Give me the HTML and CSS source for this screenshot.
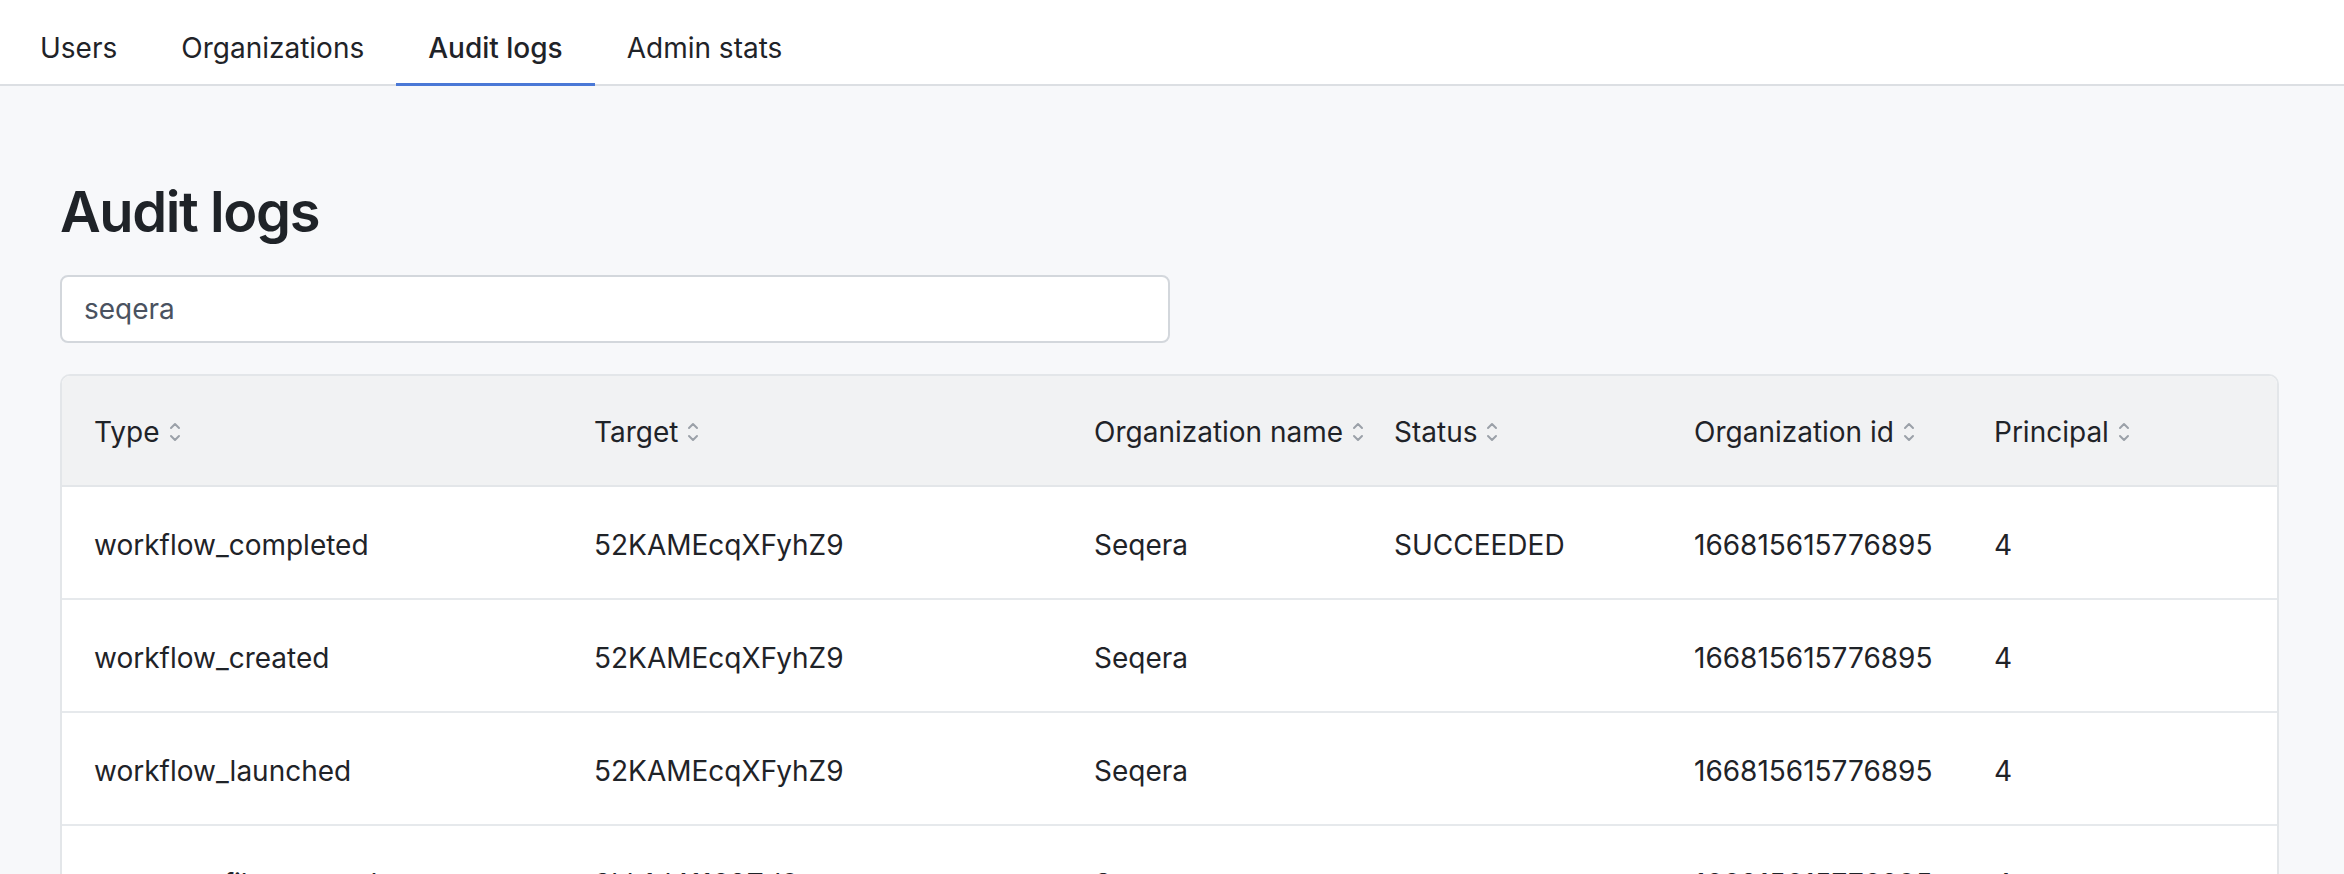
FILE: index.html
```html
<!DOCTYPE html>
<html lang="en">
<head>
<meta charset="utf-8">
<title>Audit logs</title>
<link rel="stylesheet" href="styles.css">
</head>
<body>
<nav class="tabs">
  <a class="tab">Users</a>
  <a class="tab">Organizations</a>
  <a class="tab active">Audit logs</a>
  <a class="tab">Admin stats</a>
</nav>
<main class="content">
  <h1 class="title">Audit logs</h1>
  <input class="search" type="text" value="seqera">
  <div class="table-wrap">
    <table class="logs">
      <colgroup>
        <col class="c-wide"><col class="c-wide"><col class="c-mid"><col class="c-mid"><col class="c-mid"><col>
      </colgroup>
      <thead>
        <tr>
          <th><span class="th-in">Type<svg class="sort" viewBox="0 0 12 22"><polyline points="2,7 6,3 10,7"/><polyline points="2,15 6,19 10,15"/></svg></span></th>
          <th><span class="th-in">Target<svg class="sort" viewBox="0 0 12 22"><polyline points="2,7 6,3 10,7"/><polyline points="2,15 6,19 10,15"/></svg></span></th>
          <th><span class="th-in">Organization name<svg class="sort" viewBox="0 0 12 22"><polyline points="2,7 6,3 10,7"/><polyline points="2,15 6,19 10,15"/></svg></span></th>
          <th><span class="th-in">Status<svg class="sort" viewBox="0 0 12 22"><polyline points="2,7 6,3 10,7"/><polyline points="2,15 6,19 10,15"/></svg></span></th>
          <th><span class="th-in">Organization id<svg class="sort" viewBox="0 0 12 22"><polyline points="2,7 6,3 10,7"/><polyline points="2,15 6,19 10,15"/></svg></span></th>
          <th><span class="th-in">Principal<svg class="sort" viewBox="0 0 12 22"><polyline points="2,7 6,3 10,7"/><polyline points="2,15 6,19 10,15"/></svg></span></th>
        </tr>
      </thead>
      <tbody>
        <tr><td>workflow_completed</td><td>52KAMEcqXFyhZ9</td><td>Seqera</td><td>SUCCEEDED</td><td>166815615776895</td><td>4</td></tr>
        <tr><td>workflow_created</td><td>52KAMEcqXFyhZ9</td><td>Seqera</td><td></td><td>166815615776895</td><td>4</td></tr>
        <tr><td>workflow_launched</td><td>52KAMEcqXFyhZ9</td><td>Seqera</td><td></td><td>166815615776895</td><td>4</td></tr>
        <tr><td>resource_file_created</td><td>3kb1d41168Zd9</td><td>Seqera</td><td></td><td>166815615776895</td><td>4</td></tr>
      </tbody>
    </table>
  </div>
</main>
</body>
</html>
```
FILE: styles.css
```css
* { box-sizing: border-box; }
html, body { margin: 0; padding: 0; }
body {
  background: #f7f8fa;
  font-family: Inter, "Noto Sans", sans-serif;
  color: #1f2328;
  font-size: 28px;
  line-height: 42px;
  overflow: hidden;
  height: 874px;
}
.tabs {
  display: flex;
  background: #ffffff;
  border-bottom: 2px solid #dcdfe3;
  padding-left: 8px;
  height: 86px;
}
.tab {
  display: block;
  padding: 27px 32px 14px;
  border-bottom: 3px solid transparent;
  margin-bottom: -2px;
  color: #1f2328;
  font-weight: 400;
  text-decoration: none;
}
.tab.active {
  border-bottom-color: #4a78d6;
  font-weight: 500;
}
.content {
  padding: 93px 65px 0 60px;
}
.title {
  margin: 0 0 29px;
  font-size: 56px;
  line-height: 67px;
  font-weight: 600;
  letter-spacing: -1.4px;
  color: #1f2328;
}
.search {
  display: block;
  width: 50%;
  height: 68px;
  border: 2px solid #d3d7dc;
  border-radius: 8px;
  background: #ffffff;
  padding: 0 22px;
  font-family: Inter, "Noto Sans", sans-serif;
  font-size: 28px;
  color: #4a5260;
  outline: none;
  margin: 0 0 31px;
}
.table-wrap {
  border: 2px solid #e3e6e9;
  border-radius: 10px;
  overflow: hidden;
  background: #ffffff;
}
.logs {
  width: 100%;
  border-collapse: separate;
  border-spacing: 0;
  table-layout: fixed;
}
.c-wide { width: 500px; }
.c-mid { width: 300px; }
.logs th {
  background: #f1f2f3;
  text-align: left;
  font-weight: 400;
  padding: 35px 0 32px 32px;
  border-bottom: 2px solid #e3e6e9;
  white-space: nowrap;
}
.th-in {
  display: inline-flex;
  align-items: center;
  gap: 9px;
}
.sort {
  width: 12px;
  height: 22px;
  fill: none;
  stroke: #9ba1a8;
  stroke-width: 2;
  stroke-linecap: round;
  stroke-linejoin: round;
}
.logs td {
  padding: 37px 0 32px 32px;
  border-bottom: 2px solid #e6e9ec;
  white-space: nowrap;
  overflow: hidden;
}
```
